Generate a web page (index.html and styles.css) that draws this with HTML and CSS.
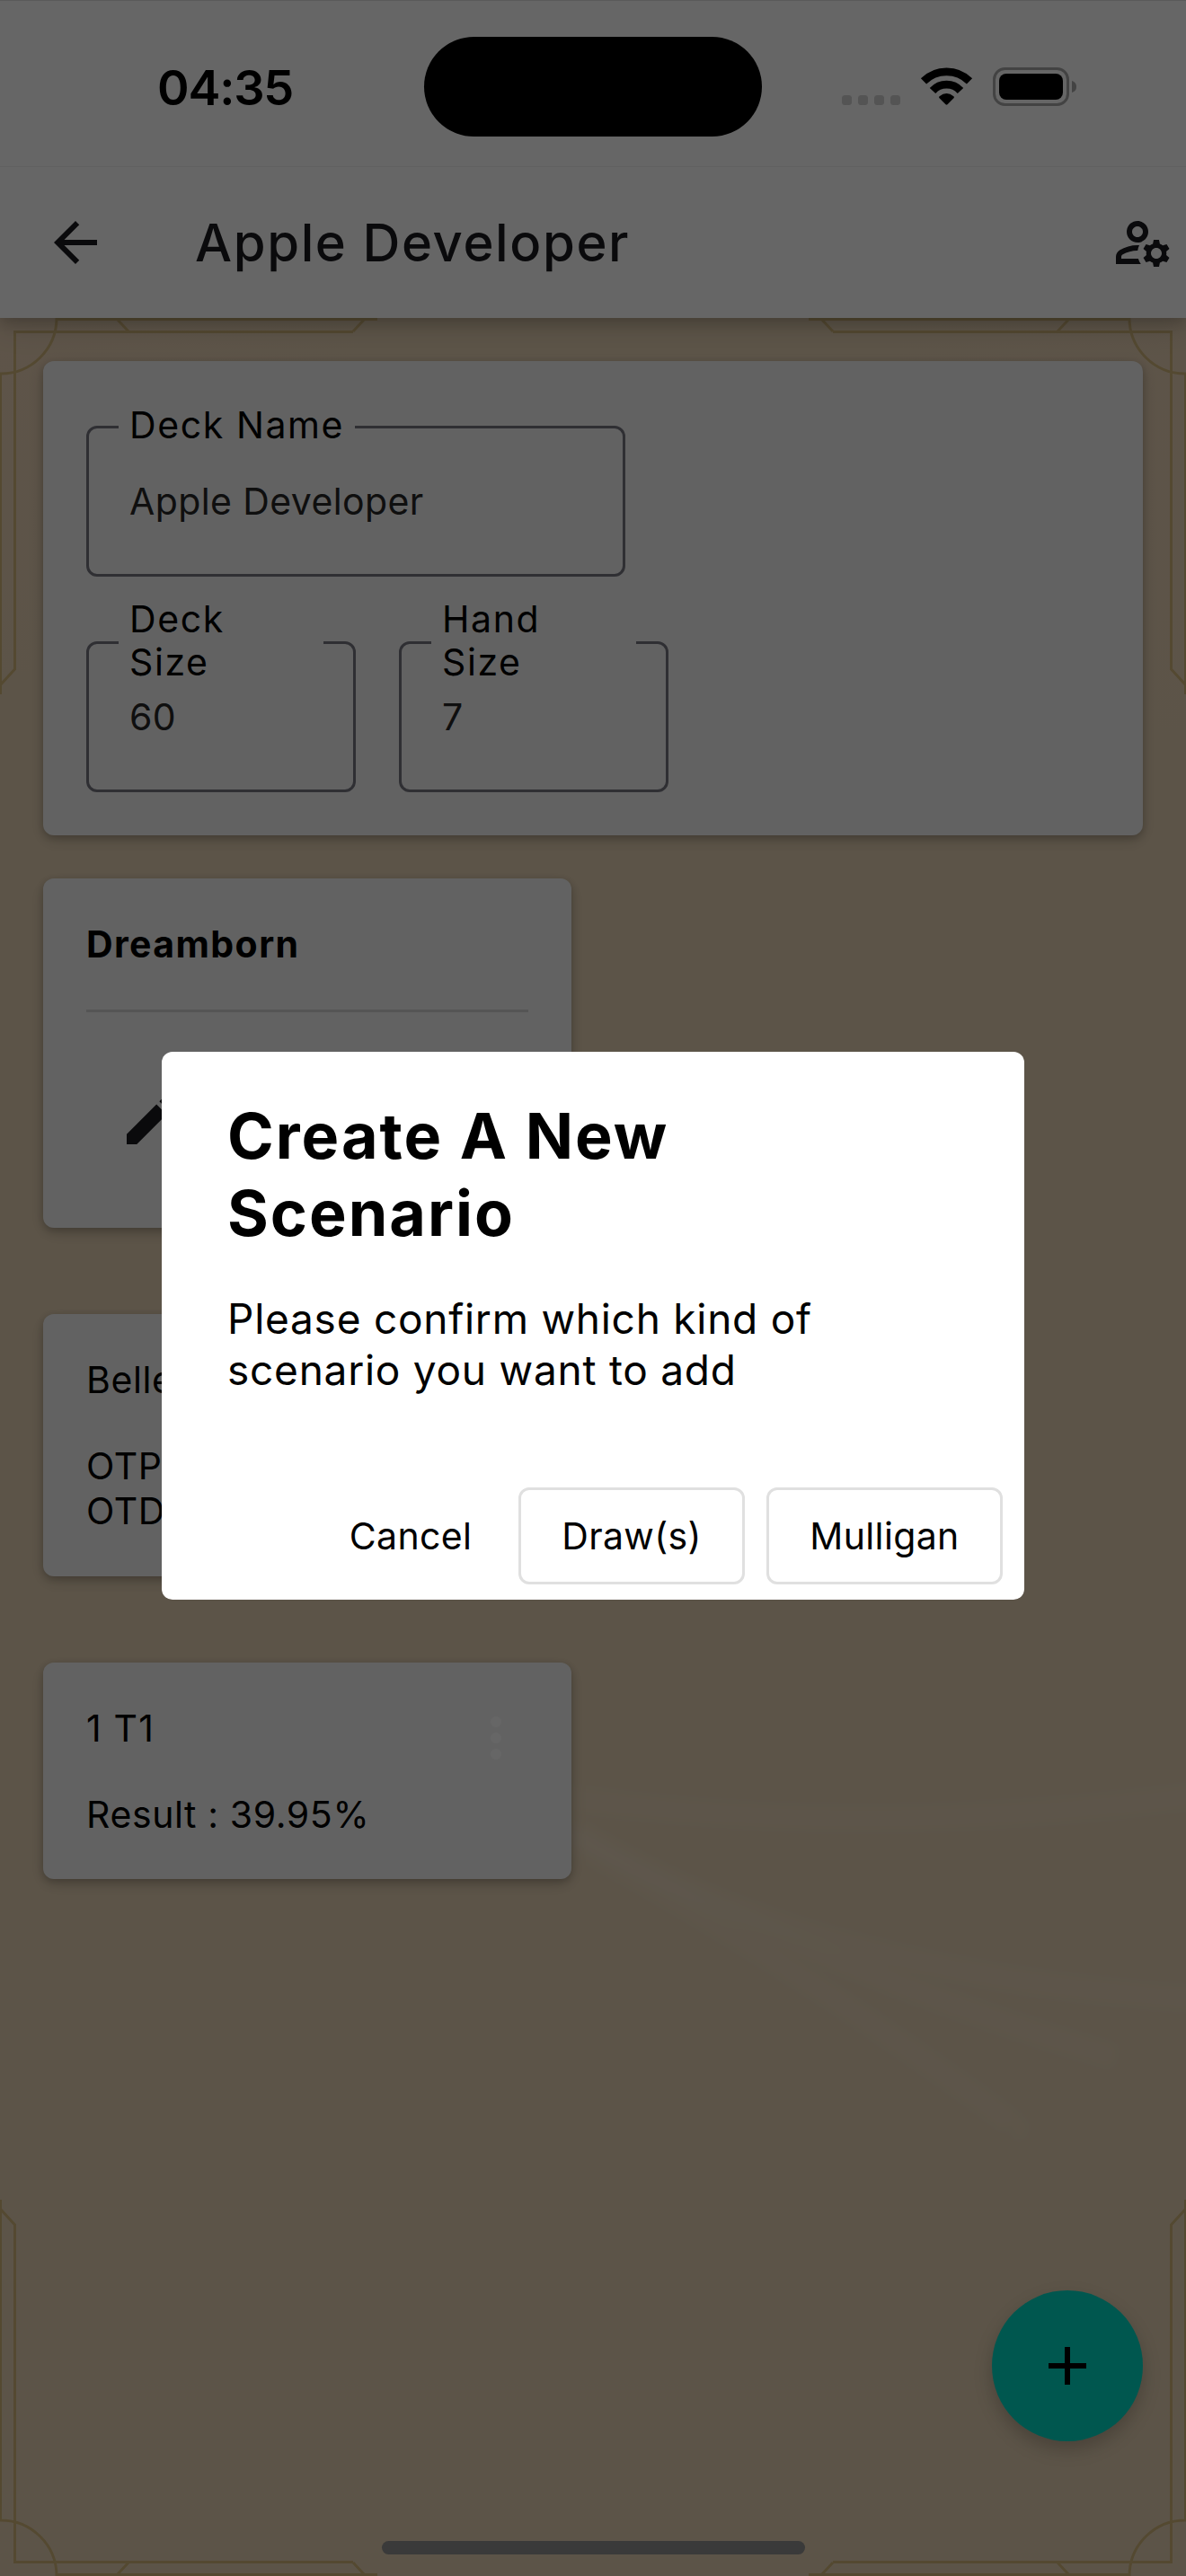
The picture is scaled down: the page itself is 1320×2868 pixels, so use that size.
FILE: index.html
```html
<!DOCTYPE html>
<html lang="en">
<head>
<meta charset="utf-8">
<title>Apple Developer</title>
<link rel="stylesheet" href="styles.css">
</head>
<body>
<div class="screen">
  <header class="header">
    <div class="status-space"></div>
    <div class="app-bar">
      <svg class="icon" viewBox="0 0 24 24"><path d="M20 11H7.83l5.59-5.59L12 4l-8 8 8 8 1.41-1.41L7.83 13H20v-2z"/></svg>
      <h1 class="app-title">Apple Developer</h1>
      <svg class="icon" viewBox="0 0 24 24"><path d="M4 18v-.65c0-.34.16-.66.41-.81C6.1 15.53 8.03 15 10 15c.03 0 .05 0 .08.01.1-.7.3-1.37.59-1.98-.22-.02-.44-.03-.67-.03-2.42 0-4.68.67-6.61 1.82-.88.52-1.39 1.5-1.39 2.53V20h9.26c-.42-.6-.75-1.28-.97-2H4zm6-6c2.21 0 4-1.79 4-4s-1.79-4-4-4-4 1.79-4 4 1.79 4 4 4zm0-6c1.1 0 2 .9 2 2s-.9 2-2 2-2-.9-2-2 .9-2 2-2zm10.75 10c0-.22-.03-.42-.06-.63l1.14-1.01-1-1.73-1.45.49c-.32-.27-.68-.48-1.08-.63L18 11h-2l-.3 1.49c-.4.15-.76.36-1.08.63l-1.45-.49-1 1.73 1.14 1.01c-.03.21-.06.41-.06.63s.03.42.06.63l-1.14 1.01 1 1.73 1.45-.49c.32.27.68.48 1.08.63L16 21h2l.3-1.49c.4-.15.76-.36 1.08-.63l1.45.49 1-1.73-1.14-1.01c.03-.21.06-.41.06-.63zM17 18c-1.1 0-2-.9-2-2s.9-2 2-2 2 .9 2 2-.9 2-2 2z"/></svg>
    </div>
  </header>

  <main class="content">
    <svg class="frame" viewBox="0 354 1320 2514">
      <defs>
        <g id="corner" fill="none" stroke="#d1b67c" stroke-width="3">
          <path d="M63 355.500H420M130 355l13 14M406 355l-13 14M16.500 746V369.500H393M16.500 745L1 762M.5 416V773M63 354A62 62 0 0 1 0 416"/>
        </g>
        <filter id="soften"><feGaussianBlur stdDeviation="6"/></filter>
      </defs>
      <g class="rays" filter="url(#soften)">
        <path d="M620 2000Q960 2050 1340 1998"/>
        <path d="M620 2030Q900 2200 1340 2226"/>
        <path d="M640 2040Q900 2190 1240 2290"/>
        <path d="M620 2040Q820 2150 980 2260T1130 2370"/>
      </g>
      <use href="#corner"/>
      <use href="#corner" transform="translate(1320 0) scale(-1 1)"/>
      <use href="#corner" transform="translate(0 3222) scale(1 -1)"/>
      <use href="#corner" transform="translate(1320 3222) scale(-1 -1)"/>
    </svg>

    <section class="card card-form">
      <div class="field field-name">
        <label class="field-label">Deck Name</label>
        <div class="field-value">Apple Developer</div>
      </div>
      <div class="field-row">
        <div class="field">
          <label class="field-label field-label-wrap">Deck Size</label>
          <div class="field-value">60</div>
        </div>
        <div class="field">
          <label class="field-label field-label-wrap">Hand Size</label>
          <div class="field-value">7</div>
        </div>
      </div>
    </section>

    <section class="card card-source">
      <h2 class="source-title">Dreamborn</h2>
      <hr class="divider">
      <svg class="icon source-edit" viewBox="0 0 24 24"><path d="M20.710 7.040C21.100 6.650 21.100 6 20.710 5.630L18.370 3.290C18 2.900 17.350 2.900 16.960 3.290L15.120 5.120 18.870 8.870M3 17.250V21H6.750L17.810 9.930 14.060 6.180 3 17.250Z"/></svg>
    </section>

    <section class="card card-scenario card-belle">
      <p>Belle</p>
      <p class="scenario-result">OTP<br>OTD</p>
    </section>

    <section class="card card-scenario card-t1">
      <div>
        <p class="scenario-name">1 T1</p>
        <p class="scenario-result">Result : 39.95%</p>
      </div>
      <svg class="icon icon-more" viewBox="0 0 24 24"><circle cx="12" cy="6" r="2"/><circle cx="12" cy="12" r="2"/><circle cx="12" cy="18" r="2"/></svg>
    </section>

    <button class="fab"><svg class="icon" viewBox="0 0 24 24"><path d="M19 13h-6v6h-2v-6H5v-2h6V5h2v6h6z"/></svg></button>
  </main>

  <div class="scrim">
    <div class="dialog">
      <h2 class="dialog-title">Create A New<br>Scenario</h2>
      <p class="dialog-text">Please confirm which kind of<br>scenario you want to add</p>
      <div class="dialog-actions">
        <button class="btn btn-text">Cancel</button>
        <button class="btn btn-draw">Draw(s)</button>
        <button class="btn btn-mulligan">Mulligan</button>
      </div>
    </div>
  </div>

  <div class="status-bar">
    <span class="clock">04:35</span>
    <div class="island"></div>
    <svg class="status-icons" viewBox="0 0 264 44">
      <g fill="#545454"><rect x="0" y="32" width="11" height="11" rx="3.500"/><rect x="18" y="32" width="11" height="11" rx="3.500"/><rect x="36" y="32" width="11" height="11" rx="3.500"/><rect x="54" y="32" width="11" height="11" rx="3.500"/></g>
      <g fill="none" stroke="#000" stroke-width="8.800"><path d="M91 16.300A36.200 36.200 0 0 1 142 16.300"/><path d="M101 27A21 21 0 0 1 132 27"/></g>
      <path d="M115.500 42.300L108.300 35Q107.600 34 108.600 33.200Q116.500 26.800 124.400 33.200Q125.400 34 124.700 35L117.500 42.300Q116.500 43.200 115.500 42.300Z"/>
      <rect x="169.500" y="2.500" width="82" height="40" rx="12" fill="none" stroke="#434343" stroke-width="3"/>
      <rect x="175" y="8" width="71" height="29" rx="8"/>
      <path d="M256 16Q261 17.500 261 22.500T256 29Z" fill="#434343"/>
    </svg>
  </div>
  <div class="home-indicator"></div>
</div>
</body>
</html>
```
FILE: styles.css
```css
* { box-sizing: border-box; }
body, h1, h2, p, hr, button { margin: 0; }
body { font-family: Inter, "Liberation Sans", sans-serif; color: #000; }
button { font-family: inherit; color: inherit; border: 0; padding: 0; }

.screen { position: relative; width: 1320px; height: 2868px; overflow: hidden; display: flex; flex-direction: column; }
.icon { display: block; width: 72px; height: 72px; flex: none; }

.header { position: relative; z-index: 1; height: 354px; flex: none; background: #fff; box-shadow: 0 6px 14px rgba(0, 0, 0, .16), 0 12px 30px rgba(0, 0, 0, .12); }
.status-space { height: 186px; border-top: 1px solid #e0e0e0; border-bottom: 1px solid #f1f1f1; }
.app-bar { height: 168px; padding: 0 12px 0 48px; display: flex; align-items: center; fill: #1b1b1f; }
.app-title { flex: 1; margin-left: 97px; font-size: 58px; font-weight: 500; line-height: 72px; letter-spacing: 1.6px; color: #1b1b1f; }

.content {
  position: relative; flex: 1; padding: 48px; display: flex; flex-direction: column; align-items: flex-start;
  background:
    radial-gradient(circle at 0 0, rgba(240, 208, 184, .35), transparent 420px),
    radial-gradient(circle at 100% 5%, rgba(240, 208, 184, .25), transparent 360px),
    #e7d3b5;
}
.frame { position: absolute; inset: 0; width: 100%; height: 100%; }
.rays { fill: none; stroke: rgba(255, 255, 255, .05); stroke-width: 22; }

.card { position: relative; width: 588px; padding: 48px; border-radius: 12px; background: #f5f5f5; box-shadow: 0 3px 9px rgba(0, 0, 0, .2), 0 6px 18px rgba(0, 0, 0, .14); }
.card-form { width: 1224px; height: 528px; padding-top: 72px; }
.field { position: relative; width: 300px; height: 168px; padding: 57px 45px; border: 3px solid #767680; border-radius: 12px; }
.field-name { width: 600px; }
.field-row { display: flex; gap: 48px; margin-top: 72px; }
.field-label { position: absolute; top: -4px; left: 33px; transform: translateY(-50%); padding: 0 12px; font-size: 41px; line-height: 48px; letter-spacing: 1.600px; background: #f5f5f5; }
.field-label-wrap { right: 33px; }
.field-value { font-size: 41px; line-height: 48px; letter-spacing: .4px; color: #262626; }

.card-source { height: 389px; margin-top: 48px; }
.source-title { font-size: 41px; font-weight: 700; line-height: 50px; letter-spacing: 1.4px; }
.divider { height: 3px; margin-top: 48px; border: 0; background: #d4d4d4; }
.source-edit { margin: 84px 0 0 36px; fill: #1b1b1f; }

.card-scenario { margin-top: 96px; font-size: 41px; line-height: 50px; letter-spacing: .6px; }
.scenario-name { letter-spacing: 1.2px; }
.scenario-result { margin-top: 46px; }
.card-belle { height: 292px; }
.card-t1 { height: 241px; display: flex; justify-content: space-between; }
.icon-more { fill: #fff; }

.fab { position: absolute; left: 1104px; top: 2196px; width: 168px; height: 168px; border-radius: 50%; background: #00dac6; display: grid; place-items: center; box-shadow: 0 9px 15px rgba(0, 0, 0, .13), 0 9px 36px rgba(0, 0, 0, .1); }

.scrim { position: absolute; inset: 0; z-index: 2; padding-top: 84px; display: grid; place-items: center; background: rgba(0, 0, 0, .6); }
.dialog { width: 960px; height: 610px; padding: 51px 24px 17px 73px; border-radius: 12px; background: #fff; display: flex; flex-direction: column; }
.dialog-title { font-size: 70px; font-weight: 700; line-height: 86px; letter-spacing: 2px; }
.dialog-text { margin-top: 46px; font-size: 46px; line-height: 57px; letter-spacing: .750px; }
.dialog-actions { margin-top: auto; display: flex; justify-content: flex-end; gap: 24px; }
.btn { height: 108px; border: 3px solid #e0e0e0; border-radius: 12px; background: #fff; font-size: 41px; letter-spacing: .350px; }
.btn-text { width: 168px; border-color: transparent; margin-right: 12px; }
.btn-draw { width: 252px; }
.btn-mulligan { width: 263px; }

.status-bar { position: absolute; inset: 0 0 auto; z-index: 3; height: 192px; padding: 0 119px 0 175px; display: flex; align-items: center; }
.clock { width: 297px; padding-top: 4px; font-size: 54px; font-weight: 600; line-height: 64px; letter-spacing: -1.2px; }
.island { width: 376px; height: 111px; margin-right: 89px; border-radius: 56px; background: #000; margin-top: 1px; }
.status-icons { width: 264px; height: 44px; flex: none; }
.home-indicator { position: absolute; z-index: 3; left: 425px; bottom: 24px; width: 471px; height: 15px; border-radius: 8px; background: #3a3a3a; }
```
